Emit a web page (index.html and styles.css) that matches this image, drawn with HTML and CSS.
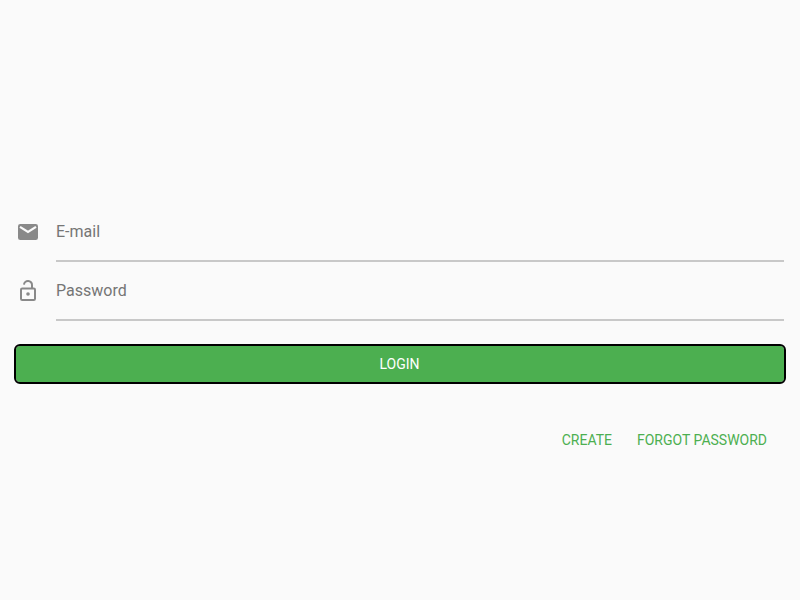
FILE: index.html
```html
<!DOCTYPE html>
<html lang="en">
<head>
<meta charset="utf-8">
<title>Login</title>
<link rel="stylesheet" href="styles.css">
</head>
<body>
<form class="login">
  <label class="field">
    <svg class="icon" viewBox="0 0 24 24"><rect x="2" y="4" width="20" height="16" rx="2.300"/><path class="flap" d="M4 6.900l8 5.100 8-5.100"/></svg>
    <span class="input">E-mail</span>
  </label>
  <label class="field">
    <svg class="icon" viewBox="0 0 24 24"><rect class="line" x="5" y="9.500" width="14" height="11.500" rx="1.200"/><path class="line" d="M16 9.500V6a4 3.800 0 0 0-8-.4"/><circle cx="12" cy="15" r="1.800"/></svg>
    <span class="input">Password</span>
  </label>
  <button class="submit" type="button">LOGIN</button>
  <nav class="links"><a>CREATE</a><a>FORGOT PASSWORD</a></nav>
</form>
</body>
</html>
```
FILE: styles.css
```css
body {
  margin: 0;
  background: #fafafa;
  font-family: Roboto, sans-serif;
}
.login {
  padding: 203px 16px 0;
}
.field {
  display: flex;
  box-sizing: border-box;
  height: 59px;
  gap: 16px;
}
.icon {
  width: 24px;
  height: 24px;
  margin-top: 17px;
  fill: #898989;
}
.icon .flap {
  fill: none;
  stroke: #fafafa;
  stroke-width: 2.2;
}
.icon .line {
  fill: none;
  stroke: #898989;
  stroke-width: 2;
}
.input {
  flex: 1;
  box-sizing: border-box;
  padding-top: 17px;
  border-bottom: 2px solid #c8c8c8;
  font-size: 16px;
  line-height: 24px;
  color: #757575;
}
.submit {
  display: block;
  width: 100%;
  height: 36px;
  margin-top: 25px;
  padding: 0 1px 0 0;
  border: 0;
  border-radius: 4px;
  outline: 2px solid #000;
  background: #4caf50;
  color: #fff;
  font: 14px/36px Roboto, sans-serif;
}
.links {
  display: flex;
  justify-content: flex-end;
  gap: 25px;
  margin-top: 46px;
  padding-right: 17px;
  color: #4caf50;
  font-size: 14px;
  line-height: 24px;
}
```
